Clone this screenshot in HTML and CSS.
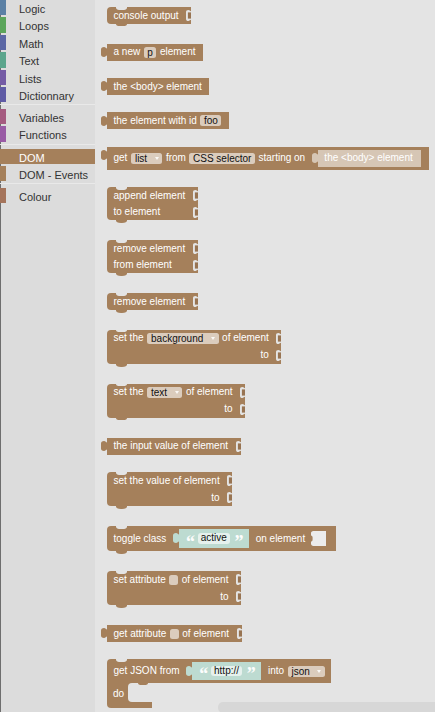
FILE: index.html
```html
<!DOCTYPE html>
<html>
<head>
<meta charset="utf-8">
<link rel="stylesheet" href="styles.css">
</head>
<body>
<div class="app">
  <nav class="toolbox">
    <div class="cat c-logic">Logic</div>
    <div class="cat c-loops">Loops</div>
    <div class="cat c-math">Math</div>
    <div class="cat c-text">Text</div>
    <div class="cat c-lists">Lists</div>
    <div class="cat c-dict">Dictionnary</div>
    <div class="sep"></div>
    <div class="cat c-vars">Variables</div>
    <div class="cat c-funcs">Functions</div>
    <div class="sep"></div>
    <div class="cat c-dom sel">DOM</div>
    <div class="cat c-dom">DOM - Events</div>
    <div class="sep"></div>
    <div class="cat c-colour">Colour</div>
  </nav>

  <main class="flyout">
    <!-- console output -->
    <div class="stmt">
      <div class="r n"><span>console output</span><i class="sp"></i><svg class="nt" viewBox="0 0 5 11"><path class="cut" d="M5 1.2C4 1.2 3.6 0 2.4 0 0.8 0 0 0.9 0 2.3V8.7C0 10.1 0.8 11 2.4 11 3.6 11 4 9.8 5 9.8Z"/><rect class="dk" x="1.9" y="2.4" width="3.1" height="6.2"/></svg></div>
    </div>

    <!-- a new p element -->
    <div class="val">
      <svg class="tab" viewBox="0 0 6 10"><path d="M6 1.4C5 1.4 4.6 0 3 0 1 0 0 1 0 2.4V7.6C0 9 1 10 3 10 4.6 10 5 8.6 6 8.6Z"/></svg>
      <div class="bd r">a new <span class="f">p</span> element</div>
    </div>

    <!-- the body element -->
    <div class="val">
      <svg class="tab" viewBox="0 0 6 10"><path d="M6 1.4C5 1.4 4.6 0 3 0 1 0 0 1 0 2.4V7.6C0 9 1 10 3 10 4.6 10 5 8.6 6 8.6Z"/></svg>
      <div class="bd r">the &lt;body&gt; element</div>
    </div>

    <!-- the element with id foo -->
    <div class="val">
      <svg class="tab" viewBox="0 0 6 10"><path d="M6 1.4C5 1.4 4.6 0 3 0 1 0 0 1 0 2.4V7.6C0 9 1 10 3 10 4.6 10 5 8.6 6 8.6Z"/></svg>
      <div class="bd r">the element with id <span class="f">foo</span></div>
    </div>

    <!-- get list from CSS selector -->
    <div class="val">
      <svg class="tab" viewBox="0 0 6 10"><path d="M6 1.4C5 1.4 4.6 0 3 0 1 0 0 1 0 2.4V7.6C0 9 1 10 3 10 4.6 10 5 8.6 6 8.6Z"/></svg>
      <div class="bd r t23">get <span class="f dd">list</span> from <span class="f">CSS selector</span> starting on
        <div class="val sh inl">
          <svg class="tab" viewBox="0 0 6 10"><path d="M6 1.4C5 1.4 4.6 0 3 0 1 0 0 1 0 2.4V7.6C0 9 1 10 3 10 4.6 10 5 8.6 6 8.6Z"/></svg>
          <div class="bd r">the &lt;body&gt; element</div>
        </div>
      </div>
    </div>

    <!-- append element -->
    <div class="stmt">
      <div class="r n"><span>append element</span><i class="sp"></i><svg class="nt" viewBox="0 0 5 11"><path class="cut" d="M5 1.2C4 1.2 3.6 0 2.4 0 0.8 0 0 0.9 0 2.3V8.7C0 10.1 0.8 11 2.4 11 3.6 11 4 9.8 5 9.8Z"/><rect class="dk" x="1.9" y="2.4" width="3.1" height="6.2"/></svg></div>
      <div class="r n"><span>to element</span><i class="sp"></i><svg class="nt" viewBox="0 0 5 11"><path class="cut" d="M5 1.2C4 1.2 3.6 0 2.4 0 0.8 0 0 0.9 0 2.3V8.7C0 10.1 0.8 11 2.4 11 3.6 11 4 9.8 5 9.8Z"/><rect class="dk" x="1.9" y="2.4" width="3.1" height="6.2"/></svg></div>
    </div>

    <!-- remove element from element -->
    <div class="stmt">
      <div class="r n"><span>remove element</span><i class="sp"></i><svg class="nt" viewBox="0 0 5 11"><path class="cut" d="M5 1.2C4 1.2 3.6 0 2.4 0 0.8 0 0 0.9 0 2.3V8.7C0 10.1 0.8 11 2.4 11 3.6 11 4 9.8 5 9.8Z"/><rect class="dk" x="1.9" y="2.4" width="3.1" height="6.2"/></svg></div>
      <div class="r n"><span>from element</span><i class="sp"></i><svg class="nt" viewBox="0 0 5 11"><path class="cut" d="M5 1.2C4 1.2 3.6 0 2.4 0 0.8 0 0 0.9 0 2.3V8.7C0 10.1 0.8 11 2.4 11 3.6 11 4 9.8 5 9.8Z"/><rect class="dk" x="1.9" y="2.4" width="3.1" height="6.2"/></svg></div>
    </div>

    <!-- remove element -->
    <div class="stmt">
      <div class="r n"><span>remove element</span><i class="sp"></i><svg class="nt" viewBox="0 0 5 11"><path class="cut" d="M5 1.2C4 1.2 3.6 0 2.4 0 0.8 0 0 0.9 0 2.3V8.7C0 10.1 0.8 11 2.4 11 3.6 11 4 9.8 5 9.8Z"/><rect class="dk" x="1.9" y="2.4" width="3.1" height="6.2"/></svg></div>
    </div>

    <!-- set the background -->
    <div class="stmt">
      <div class="r n t17">set the <span class="f dd">background</span> of element<i class="sp"></i><svg class="nt" viewBox="0 0 5 11"><path class="cut" d="M5 1.2C4 1.2 3.6 0 2.4 0 0.8 0 0 0.9 0 2.3V8.7C0 10.1 0.8 11 2.4 11 3.6 11 4 9.8 5 9.8Z"/><rect class="dk" x="1.9" y="2.4" width="3.1" height="6.2"/></svg></div>
      <div class="r n t17"><i class="sp"></i><span>to</span><svg class="nt" viewBox="0 0 5 11"><path class="cut" d="M5 1.2C4 1.2 3.6 0 2.4 0 0.8 0 0 0.9 0 2.3V8.7C0 10.1 0.8 11 2.4 11 3.6 11 4 9.8 5 9.8Z"/><rect class="dk" x="1.9" y="2.4" width="3.1" height="6.2"/></svg></div>
    </div>

    <!-- set the text -->
    <div class="stmt">
      <div class="r n t17">set the <span class="f dd">text</span> of element<i class="sp"></i><svg class="nt" viewBox="0 0 5 11"><path class="cut" d="M5 1.2C4 1.2 3.6 0 2.4 0 0.8 0 0 0.9 0 2.3V8.7C0 10.1 0.8 11 2.4 11 3.6 11 4 9.8 5 9.8Z"/><rect class="dk" x="1.9" y="2.4" width="3.1" height="6.2"/></svg></div>
      <div class="r n t17"><i class="sp"></i><span>to</span><svg class="nt" viewBox="0 0 5 11"><path class="cut" d="M5 1.2C4 1.2 3.6 0 2.4 0 0.8 0 0 0.9 0 2.3V8.7C0 10.1 0.8 11 2.4 11 3.6 11 4 9.8 5 9.8Z"/><rect class="dk" x="1.9" y="2.4" width="3.1" height="6.2"/></svg></div>
    </div>

    <!-- the input value of element -->
    <div class="val">
      <svg class="tab" viewBox="0 0 6 10"><path d="M6 1.4C5 1.4 4.6 0 3 0 1 0 0 1 0 2.4V7.6C0 9 1 10 3 10 4.6 10 5 8.6 6 8.6Z"/></svg>
      <div class="bd r n"><span>the input value of element</span><i class="sp"></i><svg class="nt" viewBox="0 0 5 11"><path class="cut" d="M5 1.2C4 1.2 3.6 0 2.4 0 0.8 0 0 0.9 0 2.3V8.7C0 10.1 0.8 11 2.4 11 3.6 11 4 9.8 5 9.8Z"/><rect class="dk" x="1.9" y="2.4" width="3.1" height="6.2"/></svg></div>
    </div>

    <!-- set the value of element -->
    <div class="stmt">
      <div class="r n t17"><span>set the value of element</span><i class="sp"></i><svg class="nt" viewBox="0 0 5 11"><path class="cut" d="M5 1.2C4 1.2 3.6 0 2.4 0 0.8 0 0 0.9 0 2.3V8.7C0 10.1 0.8 11 2.4 11 3.6 11 4 9.8 5 9.8Z"/><rect class="dk" x="1.9" y="2.4" width="3.1" height="6.2"/></svg></div>
      <div class="r n t17"><i class="sp"></i><span>to</span><svg class="nt" viewBox="0 0 5 11"><path class="cut" d="M5 1.2C4 1.2 3.6 0 2.4 0 0.8 0 0 0.9 0 2.3V8.7C0 10.1 0.8 11 2.4 11 3.6 11 4 9.8 5 9.8Z"/><rect class="dk" x="1.9" y="2.4" width="3.1" height="6.2"/></svg></div>
    </div>

    <!-- toggle class -->
    <div class="stmt">
      <div class="r t25">toggle class
        <div class="val txt inl">
          <svg class="tab" viewBox="0 0 6 10"><path d="M6 1.4C5 1.4 4.6 0 3 0 1 0 0 1 0 2.4V7.6C0 9 1 10 3 10 4.6 10 5 8.6 6 8.6Z"/></svg>
          <div class="bd r"><span class="q">“</span><span class="f">active</span><span class="q">”</span></div>
        </div>
        on element
        <svg class="slot" viewBox="0 0 15 15"><path d="M15 0V15H2.4C0.9 15 0 14 0 12.8V10.6C0.8 10.6 1.6 9.8 1.6 8.4V6.6C1.6 5.2 0.8 4.4 0 4.4V2.2C0 1 0.9 0 2.4 0Z"/></svg>
      </div>
    </div>

    <!-- set attribute -->
    <div class="stmt">
      <div class="r n t17">set attribute <span class="f em"></span> of element<i class="sp"></i><svg class="nt" viewBox="0 0 5 11"><path class="cut" d="M5 1.2C4 1.2 3.6 0 2.4 0 0.8 0 0 0.9 0 2.3V8.7C0 10.1 0.8 11 2.4 11 3.6 11 4 9.8 5 9.8Z"/><rect class="dk" x="1.9" y="2.4" width="3.1" height="6.2"/></svg></div>
      <div class="r n t17"><i class="sp"></i><span>to</span><svg class="nt" viewBox="0 0 5 11"><path class="cut" d="M5 1.2C4 1.2 3.6 0 2.4 0 0.8 0 0 0.9 0 2.3V8.7C0 10.1 0.8 11 2.4 11 3.6 11 4 9.8 5 9.8Z"/><rect class="dk" x="1.9" y="2.4" width="3.1" height="6.2"/></svg></div>
    </div>

    <!-- get attribute -->
    <div class="val">
      <svg class="tab" viewBox="0 0 6 10"><path d="M6 1.4C5 1.4 4.6 0 3 0 1 0 0 1 0 2.4V7.6C0 9 1 10 3 10 4.6 10 5 8.6 6 8.6Z"/></svg>
      <div class="bd r n">get attribute <span class="f em"></span> of element<i class="sp"></i><svg class="nt" viewBox="0 0 5 11"><path class="cut" d="M5 1.2C4 1.2 3.6 0 2.4 0 0.8 0 0 0.9 0 2.3V8.7C0 10.1 0.8 11 2.4 11 3.6 11 4 9.8 5 9.8Z"/><rect class="dk" x="1.9" y="2.4" width="3.1" height="6.2"/></svg></div>
    </div>

    <!-- get JSON -->
    <div class="cblk">
      <div class="r t23 top">get JSON from
        <div class="val txt inl">
          <svg class="tab" viewBox="0 0 6 10"><path d="M6 1.4C5 1.4 4.6 0 3 0 1 0 0 1 0 2.4V7.6C0 9 1 10 3 10 4.6 10 5 8.6 6 8.6Z"/></svg>
          <div class="bd r"><span class="q">“</span><span class="f">http://</span><span class="q">”</span></div>
        </div>
        into <span class="f dd">json</span>
      </div>
      <div class="lower">
        <div class="spine">do</div>
        <div class="mouthcol"><div class="mouth"></div><div class="arm"></div></div>
      </div>
    </div>

    <div class="hscroll"></div>
  </main>
</div>
</body>
</html>
```

FILE: styles.css
```css
* { box-sizing: border-box; margin: 0; padding: 0; }

html, body {
  width: 435px;
  height: 712px;
  overflow: hidden;
}

body {
  font-family: "Liberation Sans", Arial, sans-serif;
  background: #e4e4e4;
}

.app {
  display: flex;
  height: 712px;
}

/* ---------- toolbox ---------- */
.toolbox {
  width: 95px;
  flex: none;
  background: linear-gradient(to right, #6e6e6e 1px, #dcdcdc 1px);
}

.cat {
  height: 15.4px;
  margin-bottom: 2px;
  border-left: 6px solid var(--c);
  padding: 4px 0 0 13px;
  font-size: 11px;
  line-height: 11px;
  color: #333;
  white-space: nowrap;
}

.cat.sel { background: #a5805b; color: #fff; }

.c-logic { --c: #5b80a5; }
.c-loops { --c: #5ba55b; }
.c-math { --c: #5b67a5; }
.c-text { --c: #5ba58c; }
.c-lists { --c: #745ba5; }
.c-dict { --c: #5f5ba5; }
.c-vars { --c: #a55b80; }
.c-funcs { --c: #995ba5; }
.c-dom { --c: #a5805b; }
.c-colour { --c: #a5745b; }

.sep {
  height: 1px;
  margin: 1.8px 0 3.7px;
  background: #e9e9e9;
}

/* ---------- flyout ---------- */
.flyout {
  flex: 1;
  position: relative;
  background: #e4e4e4;
  padding: 7.3px 0 0 12px;
  display: flex;
  flex-direction: column;
  align-items: flex-start;
  gap: 17.3px;
  overflow: hidden;
  color: #fff;
  font-size: 10px;
  line-height: 10px;
  --b: #a5805b;
  --bg: #e4e4e4;
}

.r {
  display: flex;
  align-items: center;
  gap: 3.5px;
  height: 16.5px;
  padding: 0 7.5px 0 6.5px;
  white-space: nowrap;
}
.r.n { padding-right: 0; }
.r.t17 { height: 17px; }
.r.t23 { height: 23.4px; }
.r.t25 { height: 25px; }

.sp { flex: 1; margin-right: -3.5px; }

.nt {
  flex: none;
  width: 5px;
  height: 11px;
  margin-left: 4px;
}
.nt .cut { fill: var(--bg); }
.nt .dk { fill: #987452; }

/* statement block */
.stmt {
  position: relative;
  display: flex;
  flex-direction: column;
  background: var(--b);
  border-radius: 4px 0 0 4px;
  margin-bottom: 2.7px;
}
.stmt::before,
.cblk::before {
  content: "";
  position: absolute;
  left: 9px;
  top: 0;
  width: 11px;
  height: 2.6px;
  background: var(--bg);
  border-radius: 0 0 5px 5px / 0 0 2.6px 2.6px;
}
.stmt::after {
  content: "";
  position: absolute;
  left: 9px;
  bottom: -2.7px;
  width: 11px;
  height: 2.7px;
  background: var(--b);
  border-radius: 0 0 5px 5px / 0 0 2.7px 2.7px;
}

/* value block */
.val {
  display: flex;
  align-items: flex-start;
  margin-left: -6px;
}
.val > .bd { background: var(--b); }
.val > .bd.r { height: 17px; }
.val > .bd.r.t23 { height: 23.4px; }

.tab {
  flex: none;
  width: 6px;
  height: 10px;
  margin-top: 3.3px;
}
.tab path { fill: var(--b); }

.val.inl { margin: 0 0.5px 0 3.2px; }
.val.sh { --b: #d6c6b5; }
.val.sh > .bd.r { padding-right: 8px; }
.val.txt { --b: #bddbd1; margin-right: 3.2px; }
.val.txt > .bd.r { height: 18.6px; padding: 0 7.5px 0 7px; gap: 4.5px; }
.val.txt .tab { margin-top: 4px; }
.val.txt .f { background: #e6f1ed; padding: 0 3.2px; border-radius: 3px; height: 10.4px; line-height: 10.4px; }

.q {
  display: inline-block;
  width: 7px;
  text-align: center;
  font-family: "Liberation Serif", "DejaVu Serif", serif;
  font-weight: bold;
  font-size: 18px;
  line-height: 10px;
  color: #fdfdfd;
  height: 10px;
  margin-top: 6px;
}

/* fields */
.f {
  display: inline-flex;
  align-items: center;
  height: 11px;
  line-height: 11px;
  padding: 0 3.6px;
  border-radius: 2.5px;
  background: #dbccbd;
  color: #111;
}
.f.dd { padding: 0 3.7px 0 4px; }
.f.dd::after {
  content: "";
  margin-left: 7.6px;
  border-left: 2px solid transparent;
  border-right: 2px solid transparent;
  border-top: 3px solid rgba(255, 255, 255, 0.85);
}
.f.em { width: 9px; height: 10px; padding: 0; border-radius: 2.5px; }

/* empty inline slot */
.slot {
  flex: none;
  width: 15px;
  height: 15px;
  margin: 0 2.5px 0 2.5px;
}
.slot path { fill: #ececec; }

/* C shaped block */
.cblk {
  position: relative;
  display: flex;
  flex-direction: column;
  align-items: flex-start;
}
.cblk .top {
  background: var(--b);
  border-radius: 4px 0 0 0;
  padding-right: 6px;
}
.lower {
  display: flex;
  height: 25.3px;
}
.spine {
  width: 21.3px;
  background: var(--b);
  border-radius: 0 0 0 4px;
  padding: 6px 0 0 6px;
}
.mouthcol {
  width: 24px;
  display: flex;
  flex-direction: column;
  background: var(--b);
}
.mouth {
  position: relative;
  height: 19.3px;
  background: var(--bg);
  border-radius: 4px 0 0 4px;
}
.mouth::before {
  content: "";
  position: absolute;
  left: 9.7px;
  top: 0;
  width: 10px;
  height: 2.7px;
  background: var(--b);
  border-radius: 0 0 5px 5px / 0 0 2.7px 2.7px;
}

/* scrollbar */
.hscroll {
  position: absolute;
  left: 123px;
  right: 0;
  bottom: -1px;
  height: 11px;
  border-radius: 5px 0 0 5px;
  background: #d7d7d7;
}
```
